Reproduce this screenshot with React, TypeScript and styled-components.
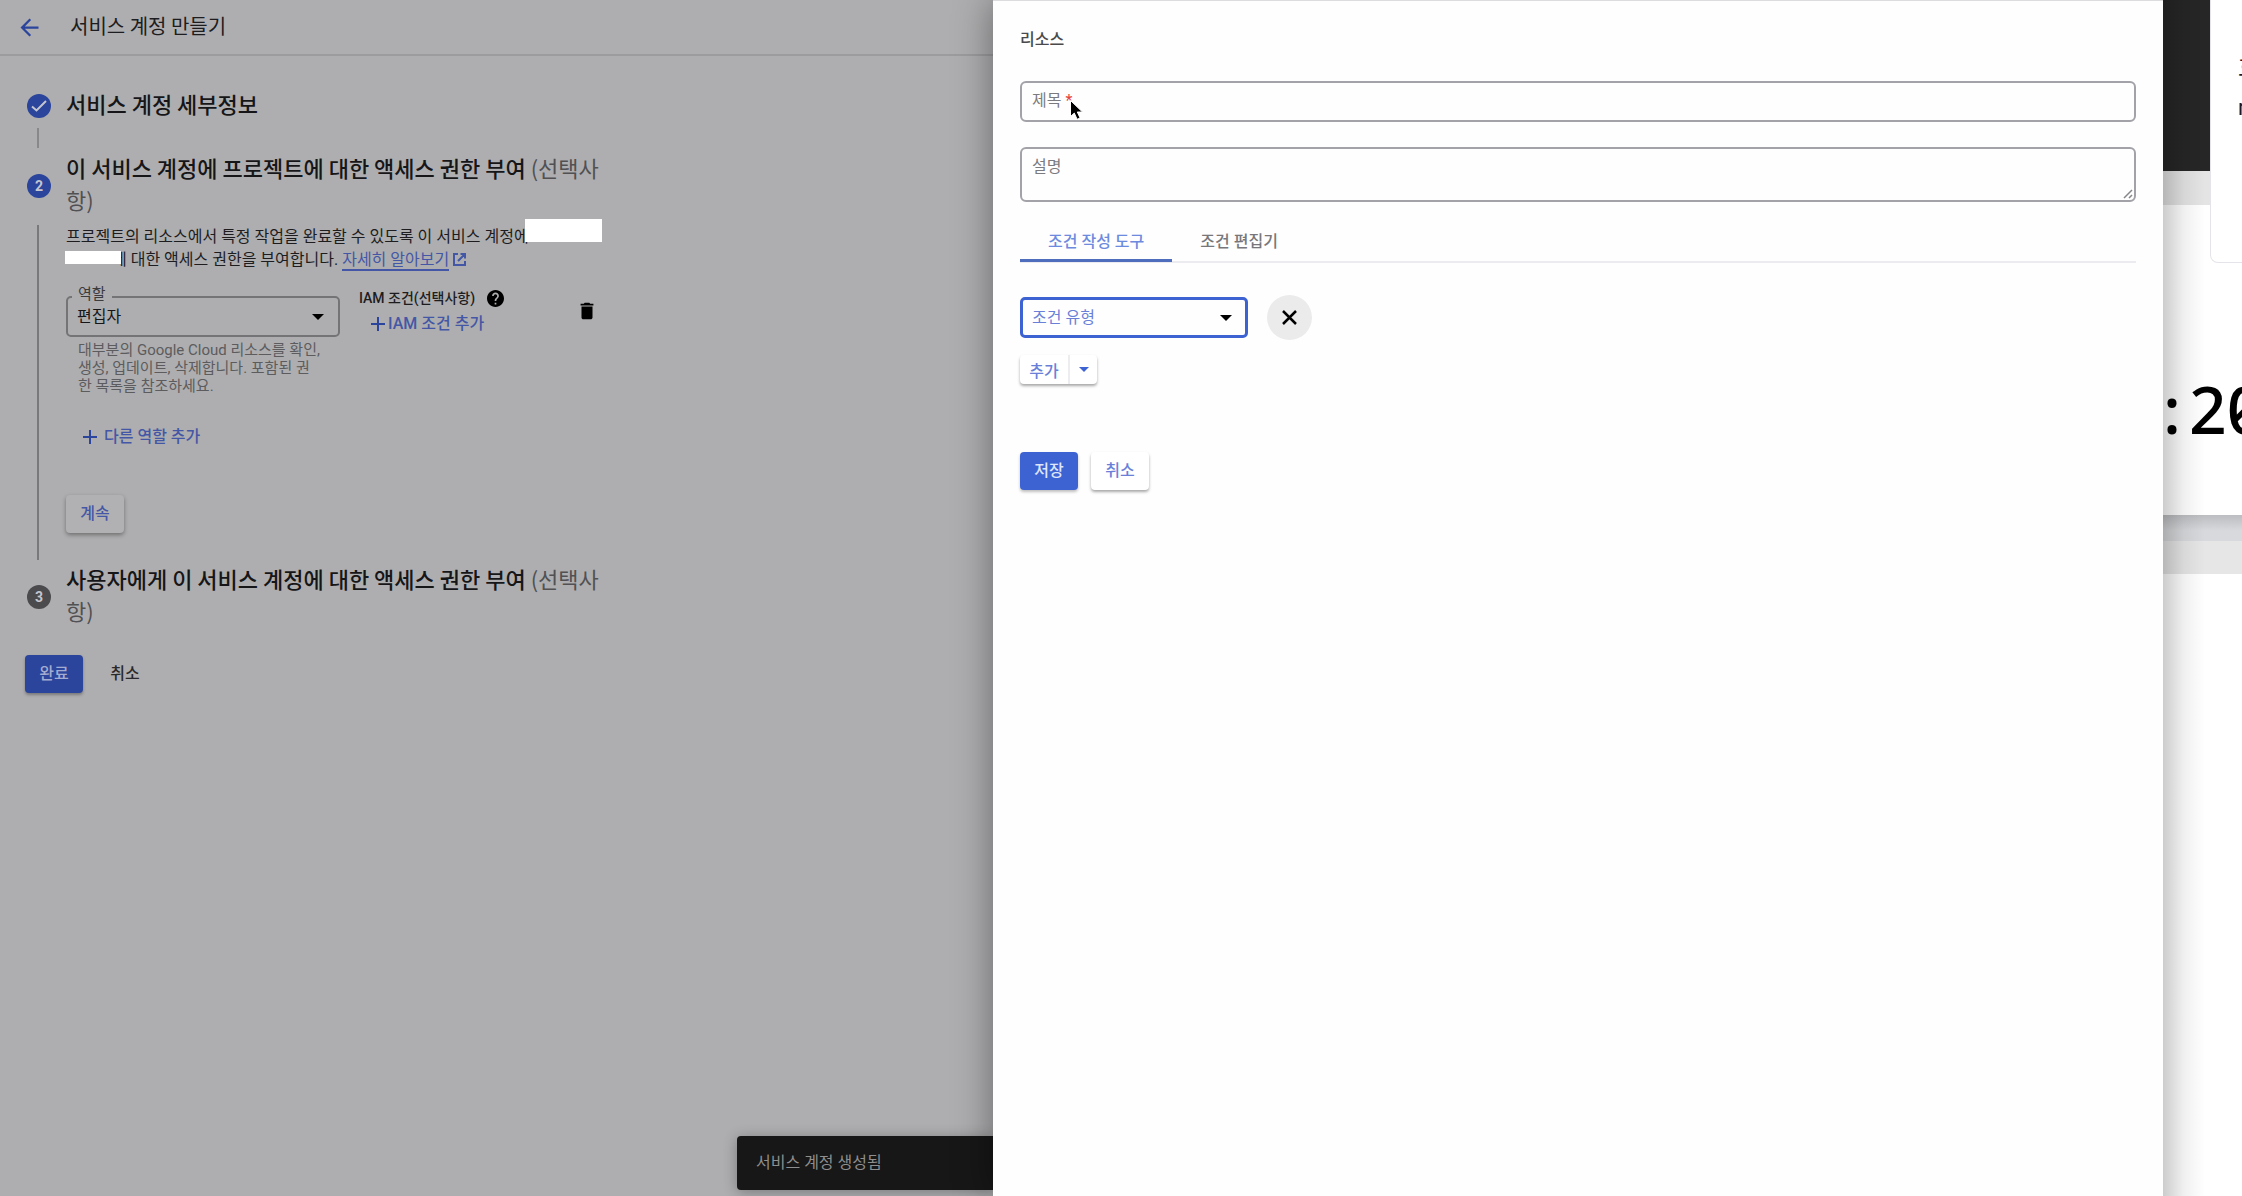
import React from "react";
import styled, { createGlobalStyle } from "styled-components";

const c = {
  blue: "#3d63d3",
  blueText: "#6a80d8",
  dimBlue: "#2b449c",
  dimBlueText: "#4457a6",
  dimBg: "#aeaeb0",
  border: "#a2a2a8",
};

const Global = createGlobalStyle`
  *, *::before, *::after { box-sizing: border-box; }
  body {
    margin: 0;
    background: #fff;
    font-family: Roboto, "Noto Sans CJK KR", sans-serif;
    font-size: 16px;
    color: #222;
  }
  h1, h2, p { margin: 0; font-weight: 400; }
  button, input, select, textarea { font: inherit; color: inherit; }
  button { cursor: pointer; }
`;

const Page = styled.div`
  display: grid;
  grid-template-columns: minmax(0, 993fr) minmax(0, 1170fr) minmax(0, 79fr);
  min-height: 100vh;
  overflow: hidden;
`;

const Workspace = styled.main`
  position: relative;
  background: ${c.dimBg};
  color: #1d1d1f;
`;

const TopBar = styled.header`
  display: flex;
  align-items: center;
  gap: 27px;
  height: 56px;
  padding: 0 16px;
  border-bottom: 2px solid #9c9c9e;
`;

const BackButton = styled.button`
  display: flex;
  width: 27px;
  padding: 0;
  border: 0;
  background: none;
  color: ${c.dimBlue};
`;

const PageTitle = styled.h1`
  padding-bottom: 2px;
  font-family: "Noto Sans CJK KR", sans-serif;
  font-size: 20px;
  line-height: 28px;
`;

const Steps = styled.ol`
  list-style: none;
  margin: 0;
  padding: 31px 24px 0 27px;
`;

const StepHead = styled.div`
  display: flex;
  align-items: center;
  gap: 15px;
  width: 580px;
`;

const Badge = styled.span<{ $tone: string }>`
  display: flex;
  flex: none;
  align-items: center;
  justify-content: center;
  width: 24px;
  height: 24px;
  border-radius: 50%;
  background: ${(p) => p.$tone};
  color: #c4c6d0;
  font-size: 14px;
  font-weight: 700;
`;

const StepTitle = styled.h2`
  padding-bottom: 6px;
  font-family: "Noto Sans CJK KR", sans-serif;
  font-size: 22px;
  line-height: 32px;
  font-weight: 500;
  word-break: break-all;
  color: #161618;
`;

const Optional = styled.span`
  font-weight: 400;
  color: #515153;
`;

const Connector = styled.div`
  width: 2px;
  height: 20px;
  margin: 3px 10px;
  background: #88888a;
`;

const StepBody = styled.div`
  margin: 4px 0 2px 10px;
  padding: 0 0 27px 27px;
  border-left: 2px solid #79797b;
`;

const Intro = styled.p`
  position: relative;
  width: 560px;
  line-height: 23px;
`;

const IntroLine = styled.span<{ $indent?: boolean }>`
  display: flex;
  align-items: center;
  white-space: pre;
  padding-left: ${(p) => (p.$indent ? "46px" : "0")};
`;

const Mask = styled.span<{ $x: number; $y: number; $w: number; $h: number }>`
  position: absolute;
  left: ${(p) => p.$x}px;
  top: ${(p) => p.$y}px;
  width: ${(p) => p.$w}px;
  height: ${(p) => p.$h}px;
  background: #fff;
`;

const LearnMore = styled.a`
  display: flex;
  align-items: center;
  gap: 4px;
  color: ${c.dimBlueText};
  text-decoration: none;
`;

const Underlined = styled.span`
  height: 23px;
  border-bottom: 2px solid ${c.dimBlueText};
`;

const RoleRow = styled.div`
  display: flex;
  align-items: flex-start;
  width: 532px;
  padding-top: 25px;
`;

const RoleColumn = styled.div`
  width: 274px;
`;

const SelectBox = styled.div`
  position: relative;
  display: flex;
  align-items: center;
`;

const FieldSelect = styled.select<{ $active?: boolean }>`
  appearance: none;
  width: 100%;
  height: 41px;
  padding: 0 36px 0 9px;
  border: ${(p) => (p.$active ? `3px solid ${c.blue}` : "2px solid #747476")};
  border-radius: 5px;
  outline: 0;
  background: transparent;
  color: ${(p) => (p.$active ? c.blueText : "#161618")};
`;

const NotchLabel = styled.label`
  position: absolute;
  left: 6px;
  top: -12px;
  padding: 0 6px;
  background: ${c.dimBg};
  font-size: 15px;
  line-height: 20px;
  color: #3c3c3e;
`;

const Caret = styled.span<{ $small?: boolean; $tone?: string }>`
  display: block;
  border: ${(p) => (p.$small ? 5 : 6)}px solid transparent;
  border-bottom-width: 0;
  border-top-color: ${(p) => p.$tone ?? "#000"};
`;

const CaretSlot = styled.span`
  position: absolute;
  right: 16px;
  pointer-events: none;
`;

const Helper = styled.p`
  padding: 4px 20px 0 12px;
  font-size: 15px;
  line-height: 18px;
  color: #5c5c5e;
  word-break: break-all;
`;

const ConditionColumn = styled.div`
  display: flex;
  flex-direction: column;
  flex: 1;
  gap: 3px;
  margin-left: 19px;
  margin-top: -9px;
`;

const ConditionTitle = styled.div`
  display: flex;
  align-items: center;
  gap: 12px;
  font-size: 14px;
  line-height: 22px;
  font-weight: 500;
`;

const TextButton = styled.button<{ $gap: number; $pad: number }>`
  display: flex;
  align-items: center;
  gap: ${(p) => p.$gap}px;
  padding: 0 0 0 ${(p) => p.$pad}px;
  border: 0;
  background: none;
  line-height: 24px;
  font-weight: 500;
  color: ${c.dimBlueText};
`;

const IconButton = styled.button`
  display: flex;
  padding: 0;
  border: 0;
  background: none;
  color: #000;
  margin-top: 4px;
`;

const AddRole = styled.div`
  padding: 30px 0 46px;
`;

const Button = styled.button<{ $kind: "dimRaised" | "dimPrimary" | "plain" | "raised" | "primary" }>`
  height: 38px;
  min-width: 58px;
  padding: 0 14px;
  border: 0;
  border-radius: 4px;
  font-weight: 500;
  line-height: 24px;
  ${(p) =>
    ({
      dimRaised: `background: #b1b1b3; color: ${c.dimBlueText}; box-shadow: 0 2px 4px rgba(0,0,0,.36);`,
      dimPrimary: `background: ${c.dimBlue}; color: #a3acd0; box-shadow: 0 2px 3px rgba(0,0,0,.3);`,
      plain: `background: none; color: #29292b;`,
      raised: `background: #fff; color: ${c.blueText}; box-shadow: 0 2px 3px rgba(0,0,0,.34);`,
      primary: `background: ${c.blue}; color: #dfe5fa; box-shadow: 0 2px 3px rgba(0,0,0,.25);`,
    })[p.$kind]}
`;

const Actions = styled.div<{ $gap: number }>`
  display: flex;
  gap: ${(p) => p.$gap}px;
`;

const PageActions = styled.div`
  padding: 23px 25px;
`;

const Toast = styled.div`
  position: absolute;
  left: 737px;
  right: 0;
  bottom: 6px;
  height: 54px;
  padding: 0 19px;
  border-radius: 4px 0 0 4px;
  background: #171717;
  color: #8e8e8e;
  line-height: 54px;
  box-shadow: 0 2px 14px rgba(0, 0, 0, 0.3);
`;

const Drawer = styled.aside`
  position: relative;
  padding: 27px 27px 0;
  border-top: 1px solid #dcdcde;
  background: #fefefe;
  box-shadow: 0 0 36px rgba(0, 0, 0, 0.42);
`;

const DrawerTitle = styled.h2`
  font-size: 16px;
  line-height: 24px;
  font-weight: 500;
  color: #4a4a4c;
`;

const Field = styled.div<{ $top: number }>`
  position: relative;
  display: flex;
  margin-top: ${(p) => p.$top}px;
`;

const TextInput = styled.input`
  width: 100%;
  height: 41px;
  padding: 0 12px;
  border: 2px solid ${c.border};
  border-radius: 6px;
  outline: 0;
  background: transparent;
`;

const TextArea = styled.textarea`
  display: block;
  width: 100%;
  height: 55px;
  padding: 8px 12px;
  border: 2px solid ${c.border};
  border-radius: 6px;
  outline: 0;
  resize: none;
  background: transparent;
`;

const FieldLabel = styled.label`
  position: absolute;
  left: 12px;
  top: 8px;
  line-height: 24px;
  color: #7b7b7f;
`;

const Star = styled.span`
  color: #e5443c;
`;

const Grip = styled.svg`
  position: absolute;
  right: 3px;
  bottom: 3px;
`;

const Pointer = styled.svg`
  position: absolute;
  left: 49px;
  top: 18px;
`;

const Tabs = styled.div`
  display: flex;
  margin-top: 18px;
  border-bottom: 2px solid #ececf0;
`;

const Tab = styled.button<{ $on?: boolean }>`
  height: 42px;
  margin-bottom: -1px;
  padding: 0 28px;
  border: 0;
  border-bottom: 3px solid ${(p) => (p.$on ? "#4f6dbd" : "transparent")};
  background: none;
  font-weight: 500;
  color: ${(p) => (p.$on ? "#6c8ade" : "#77777b")};
`;

const ConditionRow = styled.div`
  display: flex;
  align-items: center;
  gap: 19px;
  margin-top: 32px;
`;

const ConditionSelect = styled(SelectBox)`
  width: 228px;
`;

const RoundButton = styled.button`
  display: flex;
  align-items: center;
  justify-content: center;
  width: 45px;
  height: 45px;
  padding: 0;
  border: 0;
  border-radius: 50%;
  background: #ebebeb;
`;

const SplitButton = styled.div`
  display: flex;
  width: fit-content;
  height: 29px;
  margin: 15px 0 68px;
  border-radius: 4px;
  background: #fff;
  box-shadow: 0 2px 3px rgba(0, 0, 0, 0.34);
`;

const SplitPart = styled.button<{ $w: number }>`
  display: flex;
  align-items: center;
  justify-content: center;
  width: ${(p) => p.$w}px;
  padding: 0;
  border: 0;
  background: none;
  font-weight: 500;
  color: ${c.blueText};
  & + & { border-left: 2px solid #ededf0; }
`;

const Behind = styled.section`
  position: relative;
  display: flex;
  flex-direction: column;
  overflow: hidden;
  background: #fff;
`;

const Band = styled.div<{ $h: number; $bg: string }>`
  flex: none;
  height: ${(p) => p.$h}px;
  background: ${(p) => p.$bg};
`;

const Clock = styled.div`
  display: flex;
  flex: none;
  align-items: center;
  gap: 8px;
  height: 310px;
  padding-top: 96px;
  font-family: "Noto Sans", sans-serif;
  font-feature-settings: "zero" 1;
  font-size: 66px;
  line-height: 1;
  font-weight: 500;
  color: #000;
`;

const Shade = styled.div`
  position: absolute;
  inset: 0 auto 0 0;
  width: 42px;
  background: linear-gradient(90deg, rgba(0, 0, 0, 0.2), rgba(0, 0, 0, 0.06) 50%, transparent);
`;

const SideCard = styled.div`
  position: absolute;
  left: 47px;
  right: -20px;
  top: 0;
  height: 263px;
  padding: 54px 0 0 27px;
  border: 1px solid #e4e4ea;
  border-top: 0;
  border-radius: 0 0 0 8px;
  background: #fff;
  white-space: nowrap;
  font-size: 24px;
  line-height: 28px;
  color: #1b1b2b;
`;

const SideNote = styled.div`
  margin-top: 12px;
  font-size: 22px;
`;

const Plus = () => (
  <svg width="14" height="14" viewBox="0 0 14 14" aria-hidden="true">
    <path d="M7 0v14M0 7h14" stroke={c.dimBlue} strokeWidth="2" />
  </svg>
);

export default function App() {
  return (
    <>
      <Global />
      <Page>
        <Workspace>
          <TopBar>
            <BackButton aria-label="뒤로">
              <svg width="27" height="27" viewBox="0 0 24 24" fill="currentColor">
                <path d="M20 11H7.83l5.59-5.59L12 4l-8 8 8 8 1.41-1.41L7.83 13H20v-2z" />
              </svg>
            </BackButton>
            <PageTitle>서비스 계정 만들기</PageTitle>
          </TopBar>

          <Steps>
            <li>
              <StepHead>
                <Badge $tone={c.dimBlue}>
                  <svg width="18" height="14" viewBox="0 0 18 14" fill="none" aria-hidden="true">
                    <path d="M2 7.500l4.500 4L16 2" stroke="currentColor" strokeWidth="2" />
                  </svg>
                </Badge>
                <StepTitle>서비스 계정 세부정보</StepTitle>
              </StepHead>
              <Connector />
            </li>
            <li>
              <StepHead>
                <Badge $tone={c.dimBlue}>2</Badge>
                <StepTitle>
                  이 서비스 계정에 프로젝트에 대한 액세스 권한 부여 <Optional>(선택사항)</Optional>
                </StepTitle>
              </StepHead>
              <StepBody>
                <Intro>
                  <IntroLine>프로젝트의 리소스에서 특정 작업을 완료할 수 있도록 이 서비스 계정에</IntroLine>
                  <IntroLine $indent>
                    {"에 대한 액세스 권한을 부여합니다. "}
                    <LearnMore href="#learn">
                      <Underlined>자세히 알아보기</Underlined>
                      <svg width="13" height="13" viewBox="0 0 13 13" fill="none" stroke="currentColor" strokeWidth="2" aria-hidden="true">
                        <path d="M5 1H1v11h11V8M7.500 1H12v4.500M12 1L5 8" />
                      </svg>
                    </LearnMore>
                  </IntroLine>
                  <Mask $x={459} $y={-6} $w={77} $h={23} />
                  <Mask $x={-1} $y={26} $w={56} $h={13} />
                </Intro>

                <RoleRow>
                  <RoleColumn>
                    <SelectBox>
                      <FieldSelect id="role" defaultValue="editor">
                        <option value="editor">편집자</option>
                      </FieldSelect>
                      <NotchLabel htmlFor="role">역할</NotchLabel>
                      <CaretSlot><Caret /></CaretSlot>
                    </SelectBox>
                    <Helper>대부분의 Google Cloud 리소스를 확인, 생성, 업데이트, 삭제합니다. 포함된 권한 목록을 참조하세요.</Helper>
                  </RoleColumn>
                  <ConditionColumn>
                    <ConditionTitle>
                      IAM 조건(선택사항)
                      <svg width="17" height="17" viewBox="2 2 20 20" aria-hidden="true">
                        <path d="M12 2C6.480 2 2 6.480 2 12s4.480 10 10 10 10-4.480 10-10S17.520 2 12 2zm1 17h-2v-2h2v2zm2.070-7.750l-.9.920C13.450 12.900 13 13.500 13 15h-2v-.5c0-1.100.450-2.100 1.170-2.830l1.240-1.260c.370-.360.590-.860.590-1.410 0-1.100-.9-2-2-2s-2 .9-2 2H8c0-2.210 1.790-4 4-4s4 1.790 4 4c0 .880-.360 1.680-.930 2.250z" />
                      </svg>
                    </ConditionTitle>
                    <TextButton $gap={3} $pad={12}><Plus />IAM 조건 추가</TextButton>
                  </ConditionColumn>
                  <IconButton aria-label="삭제">
                    <svg width="22" height="22" viewBox="0 0 24 24" fill="currentColor">
                      <path d="M6 19c0 1.100.9 2 2 2h8c1.100 0 2-.9 2-2V7H6v12zM19 4h-3.500l-1-1h-5l-1 1H5v2h14V4z" />
                    </svg>
                  </IconButton>
                </RoleRow>

                <AddRole>
                  <TextButton $gap={7} $pad={17}><Plus />다른 역할 추가</TextButton>
                </AddRole>
                <Button $kind="dimRaised">계속</Button>
              </StepBody>
            </li>
            <li>
              <StepHead>
                <Badge $tone="#4b4b4d">3</Badge>
                <StepTitle>
                  사용자에게 이 서비스 계정에 대한 액세스 권한 부여 <Optional>(선택사항)</Optional>
                </StepTitle>
              </StepHead>
            </li>
          </Steps>

          <PageActions>
            <Actions $gap={13}>
              <Button $kind="dimPrimary">완료</Button>
              <Button $kind="plain">취소</Button>
            </Actions>
          </PageActions>

          <Toast role="status">서비스 계정 생성됨</Toast>
        </Workspace>

        <Drawer>
          <DrawerTitle>리소스</DrawerTitle>
          <Field $top={29}>
            <TextInput id="title" required />
            <FieldLabel htmlFor="title">제목 <Star>*</Star></FieldLabel>
            <Pointer width="16" height="24" viewBox="0 0 16 24" aria-hidden="true">
              <path d="M1.500 1.500v16l3.800-3.400 2.800 6.200 3-1.300-2.800-6h5.200z" fill="#000" stroke="#fff" strokeWidth="1" />
            </Pointer>
          </Field>
          <Field $top={25}>
            <TextArea id="description" />
            <FieldLabel htmlFor="description">설명</FieldLabel>
            <Grip width="10" height="10" viewBox="0 0 10 10" aria-hidden="true">
              <path d="M1 9L9 1M6 9l3-3" stroke="#85858a" strokeWidth="1.500" />
            </Grip>
          </Field>

          <Tabs role="tablist">
            <Tab role="tab" aria-selected="true" $on>조건 작성 도구</Tab>
            <Tab role="tab" aria-selected="false">조건 편집기</Tab>
          </Tabs>

          <ConditionRow>
            <ConditionSelect>
              <FieldSelect $active aria-label="조건 유형" defaultValue="">
                <option value="">조건 유형</option>
              </FieldSelect>
              <CaretSlot><Caret /></CaretSlot>
            </ConditionSelect>
            <RoundButton aria-label="조건 삭제">
              <svg width="15" height="15" viewBox="0 0 15 15" aria-hidden="true">
                <path d="M1 1l13 13M14 1L1 14" stroke="#000" strokeWidth="2.500" />
              </svg>
            </RoundButton>
          </ConditionRow>

          <SplitButton>
            <SplitPart $w={48}>추가</SplitPart>
            <SplitPart $w={29} aria-label="추가 옵션"><Caret $small $tone={c.blue} /></SplitPart>
          </SplitButton>

          <Actions $gap={13}>
            <Button $kind="primary">저장</Button>
            <Button $kind="raised">취소</Button>
          </Actions>
        </Drawer>

        <Behind>
          <Band $h={171} $bg="#262626" />
          <Band $h={34} $bg="#e4e4e5" />
          <Clock><span>:</span><span>20</span></Clock>
          <Band $h={26} $bg="linear-gradient(#bcbdc0, #d8d9dc 60%)" />
          <Band $h={33} $bg="#e6e6e6" />
          <Shade />
          <SideCard>
            호
            <SideNote>r</SideNote>
          </SideCard>
        </Behind>
      </Page>
    </>
  );
}
